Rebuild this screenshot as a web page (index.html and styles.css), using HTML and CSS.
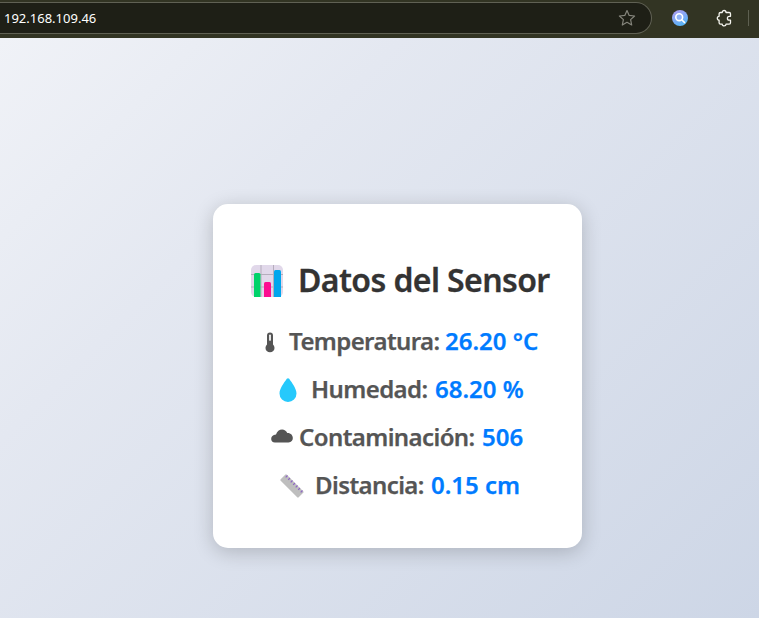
FILE: index.html
```html
<!DOCTYPE html>
<html lang="es">
<head>
<meta charset="utf-8">
<title>Datos del Sensor</title>
<link rel="stylesheet" href="styles.css">
</head>
<body>
<header class="toolbar">
  <div class="address">
    <span class="url">192.168.109.46</span>
    <svg class="star" width="18" height="18" viewBox="0 0 18 18"><path d="M9 1.5 11.2 6.4 16.6 7 12.6 10.6 13.7 16 9 13.3 4.3 16 5.4 10.6 1.4 7 6.8 6.4Z" fill="none" stroke="#85857c" stroke-width="1.2" stroke-linejoin="round"/></svg>
  </div>
  <svg class="lens" width="16" height="16" viewBox="0 0 16 16"><defs><linearGradient id="g" x1="0" y1="0" x2=".5" y2="1"><stop offset="0" stop-color="#b49af0"/><stop offset="1" stop-color="#58b4f8"/></linearGradient></defs><circle cx="8" cy="8" r="8" fill="url(#g)"/><circle cx="7.2" cy="7.2" r="3.4" fill="#8fb1f5" stroke="#fff" stroke-width="1.6"/><path d="m10 10 2.5 2.5" stroke="#fff" stroke-width="1.7" stroke-linecap="round"/></svg>
  <svg class="puzzle" width="16" height="18" viewBox="0 0 16 18"><path d="M4.500 3.500H6.200C6.200.8 10 .8 10 3.500H13.200Q14.500 3.500 14.500 4.800V7.300H13.200C10.800 7.300 10.800 11.200 13.200 11.200H14.500V13.800Q14.500 15.200 13.200 15.200H10C10 17.400 6.200 17.400 6.200 15.200H4.500Q3.100 15.200 3.100 13.800V11.200C.7 11.200.7 7.300 3.100 7.300V4.800Q3.100 3.500 4.500 3.500Z" fill="none" stroke="#f4f4ee" stroke-width="1.300" stroke-linejoin="round"/></svg>
  <span class="divider"></span>
</header>
<main class="page">
  <section class="card">
    <h1 class="title">
      <svg class="chart" width="32" height="32" viewBox="0 0 32 32"><rect width="32" height="32" rx="5" fill="#e1d8ea"/><path d="M10 0V32M22.500 0V32M0 9.500H32M0 22H32" stroke="#b5adbc" stroke-width="1"/><path d="M3 32V9.500Q3 8 4.500 8H8Q9.500 8 9.500 9.500V32Z" fill="#00d26a"/><path d="M13 32V18.500Q13 17 14.500 17H18.500Q20 17 20 18.500V32Z" fill="#fc0d91"/><path d="M23 32V6.500Q23 5 24.500 5H28.500Q30 5 30 6.500V32Z" fill="#00a6ed"/></svg>
      <span class="title-text">Datos del Sensor</span>
    </h1>
    <p class="row temperature">
      <svg class="icon" width="10" height="22" viewBox="0 0 10 22"><path d="M2 3.500a3 3 0 0 1 6 0V12.500a4.500 4.500 0 1 1-6 0Z" fill="#555"/><path d="M5 3.300V8" stroke="#fff" stroke-width="1.700" stroke-linecap="round"/></svg>
      <span class="label">Temperatura:</span><span class="value">26.20 °C</span>
    </p>
    <p class="row humidity">
      <svg class="icon" width="18" height="24" viewBox="0 0 18 24"><path d="M7.800.8Q9-.5 10.200.8C13 5 17.500 10.500 17.500 15.500A8.500 8.500 0 0 1 .5 15.500C.5 10.500 5 5 7.800.8Z" fill="#26c9fc"/></svg>
      <span class="label">Humedad:</span><span class="value">68.20 %</span>
    </p>
    <p class="row pollution">
      <svg class="icon" width="22" height="14" viewBox="0 0 22 14"><path d="M4 13.500C-1.300 13.500-1.200 5.800 5 5.600 6.500-.5 14-1.500 16.300 4 23.300 3.800 23.600 13.500 17.500 13.500Z" fill="#555"/></svg>
      <span class="label">Contaminación:</span><span class="value">506</span>
    </p>
    <p class="row distance">
      <svg class="icon" width="24" height="24" viewBox="0 0 24 24"><path d="M.7 5.300 5.200.7Q6-.1 6.800.7L23.200 17.200Q24 18 23.200 18.800L18.700 23.300Q18 24 17.200 23.300L.7 6.800Q0 6 .7 5.300Z" fill="#bebebe"/><path d="m7.500 1.500-1.800 1.800M10 4 8.200 5.800M12.500 6.500l-1.800 1.800M15 9l-1.800 1.800M17.500 11.500l-1.800 1.800M20 14l-1.800 1.800M22.500 16.500l-1.800 1.800" stroke="#8d65c5" stroke-width="1.200"/></svg>
      <span class="label">Distancia:</span><span class="value">0.15 cm</span>
    </p>
  </section>
</main>
</body>
</html>
```

FILE: styles.css
```css
* { box-sizing: border-box; }
body {
  margin: 0;
  width: 759px;
  height: 618px;
  overflow: hidden;
  display: flex;
  flex-direction: column;
  font-family: "Noto Sans", "Open Sans", sans-serif;
}
.toolbar {
  height: 38px;
  flex: none;
  display: flex;
  align-items: center;
  padding-bottom: 2px;
  background: #323423;
}
.address {
  width: 652px;
  height: 32px;
  display: flex;
  align-items: center;
  justify-content: space-between;
  padding: 0 15px 0 4px;
  background: #1e1f16;
  border: 1px solid #606154;
  border-left: 0;
  border-radius: 0 16px 16px 0;
}
.url { color: #fff; font-size: 13px; padding-bottom: 1px; }
.lens { margin-left: 20px; }
.puzzle { margin-left: 28px; }
.divider { width: 1px; height: 16px; margin-left: 16px; background: #5e6051; }
.page {
  flex: 1;
  padding: 166px 0 0 213px;
  background: linear-gradient(135deg, #f0f2f7 0%, #e4e8f1 30%, #cdd6e6 100%);
}
.card {
  width: 369px;
  height: 344px;
  padding-top: 53px;
  border-radius: 15px;
  background: #fff;
  box-shadow: 0 4px 20px rgba(0, 0, 0, 0.2);
}
.title {
  height: 48px;
  margin: 0 0 13px;
  padding-left: 38px;
  display: flex;
  align-items: center;
  font-size: 32px;
  font-weight: 600;
  color: #333;
  white-space: nowrap;
  -webkit-text-stroke: 0.3px;
}
.title-text { margin-left: 15px; padding-bottom: 3px; letter-spacing: -0.6px; }
.row {
  height: 48px;
  margin: 0;
  display: flex;
  align-items: center;
  font-size: 24px;
  font-weight: 600;
  color: #555;
  white-space: nowrap;
  -webkit-text-stroke: 0.25px;
}
.value { color: #007bff; padding-bottom: 3px; }
.icon, .label { flex: none; }
.label { padding-bottom: 3px; letter-spacing: -0.6px; }
.temperature { padding-left: 52px; }
.temperature .icon { margin-top: 2px; }
.temperature .label { width: 156px; margin-left: 14px; }
.humidity { padding-left: 66px; }
.humidity .label { width: 124px; margin-left: 14px; }
.pollution { padding-left: 58px; }
.pollution .icon { margin-bottom: 4px; }
.pollution .label { width: 183px; margin-left: 6px; }
.distance { padding-left: 67px; }
.distance .label { width: 116px; margin-left: 11px; }
```
